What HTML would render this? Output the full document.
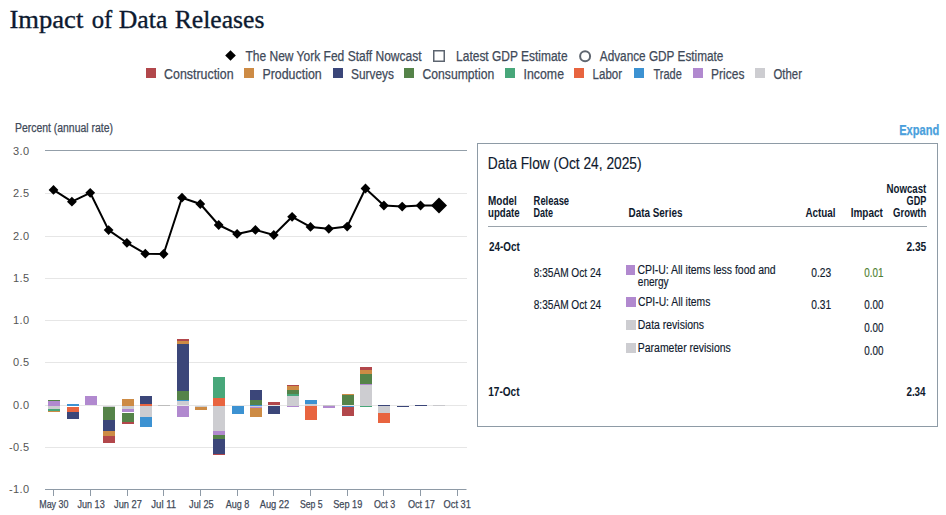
<!DOCTYPE html>
<html><head><meta charset="utf-8"><title>Impact of Data Releases</title>
<style>
html,body{margin:0;padding:0;background:#fff;width:946px;height:515px;overflow:hidden;font-family:"Liberation Sans",sans-serif;}
svg{display:block;}
</style></head><body>
<svg width="946" height="515" viewBox="0 0 946 515">
<rect x="0" y="0" width="946" height="515" fill="#fff"/>
<path d="M230.5 50.2 L235.8 55.5 L230.5 60.8 L225.2 55.5 Z" fill="#000"/>
<rect x="433.75" y="50.75" width="10.5" height="10.5" fill="none" stroke="#5d6570" stroke-width="1.5"/>
<circle cx="585.1" cy="56.2" r="5" fill="none" stroke="#5f6670" stroke-width="2"/>
<rect x="146" y="68" width="10" height="10" fill="#b2474b"/>
<rect x="244" y="68" width="10" height="10" fill="#cd8b45"/>
<rect x="333" y="68" width="10" height="10" fill="#3b4679"/>
<rect x="404" y="68" width="10" height="10" fill="#558349"/>
<rect x="505" y="68" width="10" height="10" fill="#48a77a"/>
<rect x="574" y="68" width="10" height="10" fill="#e8643f"/>
<rect x="634" y="68" width="10" height="10" fill="#3c92d2"/>
<rect x="693" y="68" width="10" height="10" fill="#b189cf"/>
<rect x="755" y="68" width="10" height="10" fill="#cdcdd1"/>
<line x1="45" y1="150.5" x2="467" y2="150.5" stroke="#939fa9" stroke-width="1"/>
<text x="29.50" y="154.9" font-size="11" fill="#555555" font-weight="normal" text-anchor="end" font-family='"Liberation Sans", sans-serif' letter-spacing="0.4">3.0</text>
<line x1="45" y1="193.5" x2="467" y2="193.5" stroke="#e6e6e6" stroke-width="1"/>
<text x="29.50" y="197.21" font-size="11" fill="#555555" font-weight="normal" text-anchor="end" font-family='"Liberation Sans", sans-serif' letter-spacing="0.4">2.5</text>
<line x1="45" y1="236.5" x2="467" y2="236.5" stroke="#e6e6e6" stroke-width="1"/>
<text x="29.50" y="239.52" font-size="11" fill="#555555" font-weight="normal" text-anchor="end" font-family='"Liberation Sans", sans-serif' letter-spacing="0.4">2.0</text>
<line x1="45" y1="278.5" x2="467" y2="278.5" stroke="#e6e6e6" stroke-width="1"/>
<text x="29.50" y="281.83" font-size="11" fill="#555555" font-weight="normal" text-anchor="end" font-family='"Liberation Sans", sans-serif' letter-spacing="0.4">1.5</text>
<line x1="45" y1="320.5" x2="467" y2="320.5" stroke="#e6e6e6" stroke-width="1"/>
<text x="29.50" y="324.14" font-size="11" fill="#555555" font-weight="normal" text-anchor="end" font-family='"Liberation Sans", sans-serif' letter-spacing="0.4">1.0</text>
<line x1="45" y1="362.5" x2="467" y2="362.5" stroke="#e6e6e6" stroke-width="1"/>
<text x="29.50" y="366.45" font-size="11" fill="#555555" font-weight="normal" text-anchor="end" font-family='"Liberation Sans", sans-serif' letter-spacing="0.4">0.5</text>
<line x1="45" y1="405.5" x2="467" y2="405.5" stroke="#e6e6e6" stroke-width="1"/>
<text x="29.50" y="408.76" font-size="11" fill="#555555" font-weight="normal" text-anchor="end" font-family='"Liberation Sans", sans-serif' letter-spacing="0.4">0.0</text>
<line x1="45" y1="447.5" x2="467" y2="447.5" stroke="#e6e6e6" stroke-width="1"/>
<text x="29.50" y="451.07" font-size="11" fill="#555555" font-weight="normal" text-anchor="end" font-family='"Liberation Sans", sans-serif' letter-spacing="0.4">-0.5</text>
<text x="29.50" y="493.38" font-size="11" fill="#555555" font-weight="normal" text-anchor="end" font-family='"Liberation Sans", sans-serif' letter-spacing="0.4">-1.0</text>
<line x1="45" y1="489.5" x2="466.5" y2="489.5" stroke="#8e9aa6" stroke-width="1"/>
<line x1="53.5" y1="489.5" x2="53.5" y2="496" stroke="#8e9aa6" stroke-width="1"/>
<line x1="90.5" y1="489.5" x2="90.5" y2="496" stroke="#8e9aa6" stroke-width="1"/>
<line x1="127.5" y1="489.5" x2="127.5" y2="496" stroke="#8e9aa6" stroke-width="1"/>
<line x1="163.5" y1="489.5" x2="163.5" y2="496" stroke="#8e9aa6" stroke-width="1"/>
<line x1="200.5" y1="489.5" x2="200.5" y2="496" stroke="#8e9aa6" stroke-width="1"/>
<line x1="237.5" y1="489.5" x2="237.5" y2="496" stroke="#8e9aa6" stroke-width="1"/>
<line x1="273.5" y1="489.5" x2="273.5" y2="496" stroke="#8e9aa6" stroke-width="1"/>
<line x1="310.5" y1="489.5" x2="310.5" y2="496" stroke="#8e9aa6" stroke-width="1"/>
<line x1="347.5" y1="489.5" x2="347.5" y2="496" stroke="#8e9aa6" stroke-width="1"/>
<line x1="383.5" y1="489.5" x2="383.5" y2="496" stroke="#8e9aa6" stroke-width="1"/>
<line x1="420.5" y1="489.5" x2="420.5" y2="496" stroke="#8e9aa6" stroke-width="1"/>
<line x1="457.5" y1="489.5" x2="457.5" y2="496" stroke="#8e9aa6" stroke-width="1"/>
<rect x="48" y="400" width="12" height="1" fill="#558349"/>
<rect x="48" y="401" width="12" height="5" fill="#b189cf"/>
<rect x="48" y="406" width="12" height="3" fill="#cdcdd1"/>
<rect x="48" y="409" width="12" height="2" fill="#48a77a"/>
<rect x="48" y="411" width="12" height="1" fill="#cd8b45"/>
<rect x="67" y="404" width="12" height="2" fill="#3c92d2"/>
<rect x="67" y="407" width="12" height="5" fill="#e8643f"/>
<rect x="67" y="412" width="12" height="7" fill="#3b4679"/>
<rect x="85" y="396" width="12" height="9" fill="#b189cf"/>
<rect x="103" y="406" width="12" height="1" fill="#cdcdd1"/>
<rect x="103" y="407" width="12" height="13" fill="#558349"/>
<rect x="103" y="420" width="12" height="11" fill="#3b4679"/>
<rect x="103" y="431" width="12" height="5" fill="#cd8b45"/>
<rect x="103" y="436" width="12" height="7" fill="#b2474b"/>
<rect x="122" y="399" width="12" height="7" fill="#cd8b45"/>
<rect x="122" y="406" width="12" height="3" fill="#cdcdd1"/>
<rect x="122" y="409" width="12" height="3" fill="#b189cf"/>
<rect x="122" y="413" width="12" height="9" fill="#558349"/>
<rect x="122" y="422" width="12" height="2" fill="#b2474b"/>
<rect x="140" y="396" width="12" height="8" fill="#3b4679"/>
<rect x="140" y="404" width="12" height="2" fill="#e8643f"/>
<rect x="140" y="406" width="12" height="11" fill="#cdcdd1"/>
<rect x="140" y="417" width="12" height="10" fill="#3c92d2"/>
<rect x="158" y="405" width="12" height="1" fill="#bdbdbd"/>
<rect x="177" y="339" width="12" height="2" fill="#b2474b"/>
<rect x="177" y="341" width="12" height="3" fill="#cd8b45"/>
<rect x="177" y="344" width="12" height="47" fill="#3b4679"/>
<rect x="177" y="391" width="12" height="9" fill="#558349"/>
<rect x="177" y="400" width="12" height="1" fill="#3c92d2"/>
<rect x="177" y="401" width="12" height="4" fill="#cdcdd1"/>
<rect x="177" y="406" width="12" height="11" fill="#b189cf"/>
<rect x="195" y="406" width="12" height="1" fill="#cdcdd1"/>
<rect x="195" y="407" width="12" height="3" fill="#cd8b45"/>
<rect x="213" y="377" width="12" height="21" fill="#48a77a"/>
<rect x="213" y="398" width="12" height="8" fill="#e8643f"/>
<rect x="213" y="406" width="12" height="25" fill="#cdcdd1"/>
<rect x="213" y="431" width="12" height="4" fill="#b189cf"/>
<rect x="213" y="435" width="12" height="4" fill="#558349"/>
<rect x="213" y="439" width="12" height="15" fill="#3b4679"/>
<rect x="213" y="454" width="12" height="1" fill="#b2474b"/>
<rect x="232" y="406" width="12" height="8" fill="#3c92d2"/>
<rect x="250" y="390" width="12" height="10" fill="#3b4679"/>
<rect x="250" y="400" width="12" height="5" fill="#558349"/>
<rect x="250" y="405" width="12" height="1" fill="#3c92d2"/>
<rect x="250" y="406" width="12" height="1" fill="#cdcdd1"/>
<rect x="250" y="407" width="12" height="1" fill="#b189cf"/>
<rect x="250" y="408" width="12" height="9" fill="#cd8b45"/>
<rect x="268" y="402" width="12" height="3" fill="#b2474b"/>
<rect x="268" y="406" width="12" height="8" fill="#3b4679"/>
<rect x="287" y="385" width="12" height="1" fill="#b2474b"/>
<rect x="287" y="386" width="12" height="4" fill="#cd8b45"/>
<rect x="287" y="390" width="12" height="4" fill="#558349"/>
<rect x="287" y="394" width="12" height="2" fill="#48a77a"/>
<rect x="287" y="396" width="12" height="10" fill="#cdcdd1"/>
<rect x="287" y="406" width="12" height="1" fill="#b189cf"/>
<rect x="305" y="400" width="12" height="4" fill="#3c92d2"/>
<rect x="305" y="404" width="12" height="2" fill="#cdcdd1"/>
<rect x="305" y="406" width="12" height="14" fill="#e8643f"/>
<rect x="323" y="405" width="12" height="1" fill="#c8c8c8"/>
<rect x="323" y="406" width="12" height="2" fill="#b189cf"/>
<rect x="342" y="394" width="12" height="1" fill="#cd8b45"/>
<rect x="342" y="395" width="12" height="10" fill="#558349"/>
<rect x="342" y="406" width="12" height="1" fill="#3c92d2"/>
<rect x="342" y="407" width="12" height="9" fill="#b2474b"/>
<rect x="360" y="367" width="12" height="3" fill="#b2474b"/>
<rect x="360" y="370" width="12" height="4" fill="#cd8b45"/>
<rect x="360" y="374" width="12" height="10" fill="#558349"/>
<rect x="360" y="384" width="12" height="1" fill="#b189cf"/>
<rect x="360" y="385" width="12" height="21" fill="#cdcdd1"/>
<rect x="360" y="406" width="12" height="1" fill="#48a77a"/>
<rect x="378" y="405" width="12" height="1" fill="#3b4679"/>
<rect x="378" y="406" width="12" height="7" fill="#cdcdd1"/>
<rect x="378" y="413" width="12" height="10" fill="#e8643f"/>
<rect x="397" y="406" width="12" height="1" fill="#3b4679"/>
<rect x="415" y="405" width="12" height="1" fill="#3b4679"/>
<rect x="433" y="405" width="12" height="1" fill="#c8c8cc"/>
<path d="M53.5 189.9 L71.9 201.7 L90.2 192.8 L108.6 230.1 L126.9 242.8 L145.3 253.7 L163.6 254.0 L182.0 197.7 L200.3 204.0 L218.7 225.0 L237.1 233.9 L255.4 229.9 L273.8 235.0 L292.1 216.8 L310.5 226.9 L328.8 228.8 L347.2 226.6 L365.5 188.5 L383.9 205.5 L402.2 206.6 L420.6 205.5 L439.0 205.5" fill="none" stroke="#000" stroke-width="2" stroke-linejoin="round"/>
<path d="M53.5 185.0 L58.4 189.9 L53.5 194.8 L48.6 189.9 Z" fill="#000"/>
<path d="M71.9 196.8 L76.8 201.7 L71.9 206.6 L67.0 201.7 Z" fill="#000"/>
<path d="M90.2 187.9 L95.1 192.8 L90.2 197.7 L85.3 192.8 Z" fill="#000"/>
<path d="M108.6 225.2 L113.5 230.1 L108.6 235.0 L103.7 230.1 Z" fill="#000"/>
<path d="M126.9 237.9 L131.8 242.8 L126.9 247.7 L122.0 242.8 Z" fill="#000"/>
<path d="M145.3 248.8 L150.2 253.7 L145.3 258.6 L140.4 253.7 Z" fill="#000"/>
<path d="M163.6 249.1 L168.5 254.0 L163.6 258.9 L158.7 254.0 Z" fill="#000"/>
<path d="M182.0 192.8 L186.9 197.7 L182.0 202.6 L177.1 197.7 Z" fill="#000"/>
<path d="M200.3 199.1 L205.2 204.0 L200.3 208.9 L195.4 204.0 Z" fill="#000"/>
<path d="M218.7 220.1 L223.6 225.0 L218.7 229.9 L213.8 225.0 Z" fill="#000"/>
<path d="M237.1 229.0 L242.0 233.9 L237.1 238.8 L232.2 233.9 Z" fill="#000"/>
<path d="M255.4 225.0 L260.3 229.9 L255.4 234.8 L250.5 229.9 Z" fill="#000"/>
<path d="M273.8 230.1 L278.7 235.0 L273.8 239.9 L268.9 235.0 Z" fill="#000"/>
<path d="M292.1 211.9 L297.0 216.8 L292.1 221.7 L287.2 216.8 Z" fill="#000"/>
<path d="M310.5 222.0 L315.4 226.9 L310.5 231.8 L305.6 226.9 Z" fill="#000"/>
<path d="M328.8 223.9 L333.7 228.8 L328.8 233.7 L323.9 228.8 Z" fill="#000"/>
<path d="M347.2 221.7 L352.1 226.6 L347.2 231.5 L342.3 226.6 Z" fill="#000"/>
<path d="M365.5 183.6 L370.4 188.5 L365.5 193.4 L360.6 188.5 Z" fill="#000"/>
<path d="M383.9 200.6 L388.8 205.5 L383.9 210.4 L379.0 205.5 Z" fill="#000"/>
<path d="M402.2 201.7 L407.1 206.6 L402.2 211.5 L397.3 206.6 Z" fill="#000"/>
<path d="M420.6 200.6 L425.5 205.5 L420.6 210.4 L415.7 205.5 Z" fill="#000"/>
<path d="M439.0 197.5 L447.0 205.5 L439.0 213.5 L431.0 205.5 Z" fill="#000"/>
<rect x="477.5" y="143.5" width="460" height="283" fill="none" stroke="#8e9ba6" stroke-width="1"/>
<line x1="488" y1="226.5" x2="927" y2="226.5" stroke="#9aa3ab" stroke-width="1"/>
<rect x="626" y="265" width="9" height="10" fill="#b189cf"/>
<rect x="626" y="297" width="10" height="10" fill="#b189cf"/>
<rect x="626" y="320" width="10" height="10" fill="#cdcdd1"/>
<rect x="626" y="343" width="10" height="10" fill="#cdcdd1"/>
<text x="9.40" y="28" font-size="25.5" fill="#0d1a30" font-weight="normal" text-anchor="start" font-family='"Liberation Serif", serif' textLength="73.90" lengthAdjust="spacingAndGlyphs" stroke="#0d1a30" stroke-width="0.35">Impact</text>
<text x="91.70" y="28" font-size="25.5" fill="#0d1a30" font-weight="normal" text-anchor="start" font-family='"Liberation Serif", serif' textLength="20.60" lengthAdjust="spacingAndGlyphs" stroke="#0d1a30" stroke-width="0.35">of</text>
<text x="118.80" y="28" font-size="25.5" fill="#0d1a30" font-weight="normal" text-anchor="start" font-family='"Liberation Serif", serif' textLength="48.50" lengthAdjust="spacingAndGlyphs" stroke="#0d1a30" stroke-width="0.35">Data</text>
<text x="174.70" y="28" font-size="25.5" fill="#0d1a30" font-weight="normal" text-anchor="start" font-family='"Liberation Serif", serif' textLength="89.70" lengthAdjust="spacingAndGlyphs" stroke="#0d1a30" stroke-width="0.35">Releases</text>
<text x="245.40" y="61" font-size="14" fill="#3f4a59" font-weight="normal" text-anchor="start" font-family='"Liberation Sans", sans-serif' textLength="176.20" lengthAdjust="spacingAndGlyphs" stroke="#3f4a59" stroke-width="0.25">The New York Fed Staff Nowcast</text>
<text x="456.10" y="61" font-size="14" fill="#3f4a59" font-weight="normal" text-anchor="start" font-family='"Liberation Sans", sans-serif' textLength="111.50" lengthAdjust="spacingAndGlyphs" stroke="#3f4a59" stroke-width="0.25">Latest GDP Estimate</text>
<text x="599.80" y="61" font-size="14" fill="#3f4a59" font-weight="normal" text-anchor="start" font-family='"Liberation Sans", sans-serif' textLength="123.60" lengthAdjust="spacingAndGlyphs" stroke="#3f4a59" stroke-width="0.25">Advance GDP Estimate</text>
<text x="164.10" y="79.2" font-size="14" fill="#3f4a59" font-weight="normal" text-anchor="start" font-family='"Liberation Sans", sans-serif' textLength="69.50" lengthAdjust="spacingAndGlyphs" stroke="#3f4a59" stroke-width="0.25">Construction</text>
<text x="262.40" y="79.2" font-size="14" fill="#3f4a59" font-weight="normal" text-anchor="start" font-family='"Liberation Sans", sans-serif' textLength="59.30" lengthAdjust="spacingAndGlyphs" stroke="#3f4a59" stroke-width="0.25">Production</text>
<text x="351.00" y="79.2" font-size="14" fill="#3f4a59" font-weight="normal" text-anchor="start" font-family='"Liberation Sans", sans-serif' textLength="42.90" lengthAdjust="spacingAndGlyphs" stroke="#3f4a59" stroke-width="0.25">Surveys</text>
<text x="422.50" y="79.2" font-size="14" fill="#3f4a59" font-weight="normal" text-anchor="start" font-family='"Liberation Sans", sans-serif' textLength="71.70" lengthAdjust="spacingAndGlyphs" stroke="#3f4a59" stroke-width="0.25">Consumption</text>
<text x="523.60" y="79.2" font-size="14" fill="#3f4a59" font-weight="normal" text-anchor="start" font-family='"Liberation Sans", sans-serif' textLength="40.40" lengthAdjust="spacingAndGlyphs" stroke="#3f4a59" stroke-width="0.25">Income</text>
<text x="592.60" y="79.2" font-size="14" fill="#3f4a59" font-weight="normal" text-anchor="start" font-family='"Liberation Sans", sans-serif' textLength="29.40" lengthAdjust="spacingAndGlyphs" stroke="#3f4a59" stroke-width="0.25">Labor</text>
<text x="653.50" y="79.2" font-size="14" fill="#3f4a59" font-weight="normal" text-anchor="start" font-family='"Liberation Sans", sans-serif' textLength="28.30" lengthAdjust="spacingAndGlyphs" stroke="#3f4a59" stroke-width="0.25">Trade</text>
<text x="711.10" y="79.2" font-size="14" fill="#3f4a59" font-weight="normal" text-anchor="start" font-family='"Liberation Sans", sans-serif' textLength="33.30" lengthAdjust="spacingAndGlyphs" stroke="#3f4a59" stroke-width="0.25">Prices</text>
<text x="773.50" y="79.2" font-size="14" fill="#3f4a59" font-weight="normal" text-anchor="start" font-family='"Liberation Sans", sans-serif' textLength="28.50" lengthAdjust="spacingAndGlyphs" stroke="#3f4a59" stroke-width="0.25">Other</text>
<text x="15.00" y="131.8" font-size="12" fill="#3f4a59" font-weight="normal" text-anchor="start" font-family='"Liberation Sans", sans-serif' textLength="97.90" lengthAdjust="spacingAndGlyphs" stroke="#3f4a59" stroke-width="0.25">Percent (annual rate)</text>
<text x="39.20" y="508" font-size="11" fill="#3f4a59" font-weight="normal" text-anchor="start" font-family='"Liberation Sans", sans-serif' textLength="29.30" lengthAdjust="spacingAndGlyphs" stroke="#3f4a59" stroke-width="0.25">May 30</text>
<text x="77.50" y="508" font-size="11" fill="#3f4a59" font-weight="normal" text-anchor="start" font-family='"Liberation Sans", sans-serif' textLength="27.20" lengthAdjust="spacingAndGlyphs" stroke="#3f4a59" stroke-width="0.25">Jun 13</text>
<text x="114.00" y="508" font-size="11" fill="#3f4a59" font-weight="normal" text-anchor="start" font-family='"Liberation Sans", sans-serif' textLength="27.80" lengthAdjust="spacingAndGlyphs" stroke="#3f4a59" stroke-width="0.25">Jun 27</text>
<text x="151.30" y="508" font-size="11" fill="#3f4a59" font-weight="normal" text-anchor="start" font-family='"Liberation Sans", sans-serif' textLength="24.90" lengthAdjust="spacingAndGlyphs" stroke="#3f4a59" stroke-width="0.25">Jul 11</text>
<text x="189.10" y="508" font-size="11" fill="#3f4a59" font-weight="normal" text-anchor="start" font-family='"Liberation Sans", sans-serif' textLength="24.50" lengthAdjust="spacingAndGlyphs" stroke="#3f4a59" stroke-width="0.25">Jul 25</text>
<text x="225.70" y="508" font-size="11" fill="#3f4a59" font-weight="normal" text-anchor="start" font-family='"Liberation Sans", sans-serif' textLength="23.60" lengthAdjust="spacingAndGlyphs" stroke="#3f4a59" stroke-width="0.25">Aug 8</text>
<text x="259.70" y="508" font-size="11" fill="#3f4a59" font-weight="normal" text-anchor="start" font-family='"Liberation Sans", sans-serif' textLength="29.50" lengthAdjust="spacingAndGlyphs" stroke="#3f4a59" stroke-width="0.25">Aug 22</text>
<text x="300.00" y="508" font-size="11" fill="#3f4a59" font-weight="normal" text-anchor="start" font-family='"Liberation Sans", sans-serif' textLength="22.70" lengthAdjust="spacingAndGlyphs" stroke="#3f4a59" stroke-width="0.25">Sep 5</text>
<text x="333.20" y="508" font-size="11" fill="#3f4a59" font-weight="normal" text-anchor="start" font-family='"Liberation Sans", sans-serif' textLength="29.10" lengthAdjust="spacingAndGlyphs" stroke="#3f4a59" stroke-width="0.25">Sep 19</text>
<text x="373.90" y="508" font-size="11" fill="#3f4a59" font-weight="normal" text-anchor="start" font-family='"Liberation Sans", sans-serif' textLength="21.30" lengthAdjust="spacingAndGlyphs" stroke="#3f4a59" stroke-width="0.25">Oct 3</text>
<text x="407.90" y="508" font-size="11" fill="#3f4a59" font-weight="normal" text-anchor="start" font-family='"Liberation Sans", sans-serif' textLength="26.90" lengthAdjust="spacingAndGlyphs" stroke="#3f4a59" stroke-width="0.25">Oct 17</text>
<text x="443.60" y="508" font-size="11" fill="#3f4a59" font-weight="normal" text-anchor="start" font-family='"Liberation Sans", sans-serif' textLength="27.20" lengthAdjust="spacingAndGlyphs" stroke="#3f4a59" stroke-width="0.25">Oct 31</text>
<text x="899.20" y="134.5" font-size="13.9" fill="#4a9fdc" font-weight="bold" text-anchor="start" font-family='"Liberation Sans", sans-serif' textLength="40.10" lengthAdjust="spacingAndGlyphs" stroke="#4a9fdc" stroke-width="0.25">Expand</text>
<text x="487.80" y="168.8" font-size="16" fill="#0f1a2e" font-weight="normal" text-anchor="start" font-family='"Liberation Sans", sans-serif' textLength="153.80" lengthAdjust="spacingAndGlyphs" stroke="#0f1a2e" stroke-width="0.15">Data Flow (Oct 24, 2025)</text>
<text x="488.00" y="205" font-size="12" fill="#0f1a2e" font-weight="bold" text-anchor="start" font-family='"Liberation Sans", sans-serif' textLength="28.80" lengthAdjust="spacingAndGlyphs">Model</text>
<text x="488.00" y="216.5" font-size="12" fill="#0f1a2e" font-weight="bold" text-anchor="start" font-family='"Liberation Sans", sans-serif' textLength="31.60" lengthAdjust="spacingAndGlyphs">update</text>
<text x="533.60" y="205" font-size="12" fill="#0f1a2e" font-weight="bold" text-anchor="start" font-family='"Liberation Sans", sans-serif' textLength="35.50" lengthAdjust="spacingAndGlyphs">Release</text>
<text x="533.60" y="216.5" font-size="12" fill="#0f1a2e" font-weight="bold" text-anchor="start" font-family='"Liberation Sans", sans-serif' textLength="19.50" lengthAdjust="spacingAndGlyphs">Date</text>
<text x="628.50" y="216.5" font-size="12" fill="#0f1a2e" font-weight="bold" text-anchor="start" font-family='"Liberation Sans", sans-serif' textLength="53.90" lengthAdjust="spacingAndGlyphs">Data Series</text>
<text x="805.40" y="216.5" font-size="12" fill="#0f1a2e" font-weight="bold" text-anchor="start" font-family='"Liberation Sans", sans-serif' textLength="30.20" lengthAdjust="spacingAndGlyphs">Actual</text>
<text x="850.70" y="216.5" font-size="12" fill="#0f1a2e" font-weight="bold" text-anchor="start" font-family='"Liberation Sans", sans-serif' textLength="32.10" lengthAdjust="spacingAndGlyphs">Impact</text>
<text x="886.50" y="192.8" font-size="12" fill="#0f1a2e" font-weight="bold" text-anchor="start" font-family='"Liberation Sans", sans-serif' textLength="39.80" lengthAdjust="spacingAndGlyphs">Nowcast</text>
<text x="906.60" y="204.6" font-size="12" fill="#0f1a2e" font-weight="bold" text-anchor="start" font-family='"Liberation Sans", sans-serif' textLength="19.70" lengthAdjust="spacingAndGlyphs">GDP</text>
<text x="893.10" y="216.5" font-size="12" fill="#0f1a2e" font-weight="bold" text-anchor="start" font-family='"Liberation Sans", sans-serif' textLength="33.20" lengthAdjust="spacingAndGlyphs">Growth</text>
<text x="489.00" y="251" font-size="12" fill="#0f1a2e" font-weight="bold" text-anchor="start" font-family='"Liberation Sans", sans-serif' textLength="30.80" lengthAdjust="spacingAndGlyphs">24-Oct</text>
<text x="906.40" y="250.5" font-size="12" fill="#0f1a2e" font-weight="bold" text-anchor="start" font-family='"Liberation Sans", sans-serif' textLength="19.90" lengthAdjust="spacingAndGlyphs">2.35</text>
<text x="533.70" y="276.8" font-size="12" fill="#0f1a2e" font-weight="normal" text-anchor="start" font-family='"Liberation Sans", sans-serif' textLength="67.50" lengthAdjust="spacingAndGlyphs" stroke="#0f1a2e" stroke-width="0.15">8:35AM Oct 24</text>
<text x="637.40" y="274" font-size="12" fill="#0f1a2e" font-weight="normal" text-anchor="start" font-family='"Liberation Sans", sans-serif' textLength="138.20" lengthAdjust="spacingAndGlyphs" stroke="#0f1a2e" stroke-width="0.15">CPI-U: All items less food and</text>
<text x="637.80" y="286.3" font-size="12" fill="#0f1a2e" font-weight="normal" text-anchor="start" font-family='"Liberation Sans", sans-serif' textLength="30.80" lengthAdjust="spacingAndGlyphs" stroke="#0f1a2e" stroke-width="0.15">energy</text>
<text x="811.30" y="277" font-size="12" fill="#0f1a2e" font-weight="normal" text-anchor="start" font-family='"Liberation Sans", sans-serif' textLength="19.90" lengthAdjust="spacingAndGlyphs" stroke="#0f1a2e" stroke-width="0.15">0.23</text>
<text x="864.20" y="277" font-size="12" fill="#4f7f33" font-weight="normal" text-anchor="start" font-family='"Liberation Sans", sans-serif' textLength="19.20" lengthAdjust="spacingAndGlyphs" stroke="#4f7f33" stroke-width="0.15">0.01</text>
<text x="533.70" y="308.5" font-size="12" fill="#0f1a2e" font-weight="normal" text-anchor="start" font-family='"Liberation Sans", sans-serif' textLength="67.50" lengthAdjust="spacingAndGlyphs" stroke="#0f1a2e" stroke-width="0.15">8:35AM Oct 24</text>
<text x="638.00" y="305.7" font-size="12" fill="#0f1a2e" font-weight="normal" text-anchor="start" font-family='"Liberation Sans", sans-serif' textLength="72.30" lengthAdjust="spacingAndGlyphs" stroke="#0f1a2e" stroke-width="0.15">CPI-U: All items</text>
<text x="811.30" y="309" font-size="12" fill="#0f1a2e" font-weight="normal" text-anchor="start" font-family='"Liberation Sans", sans-serif' textLength="19.90" lengthAdjust="spacingAndGlyphs" stroke="#0f1a2e" stroke-width="0.15">0.31</text>
<text x="864.20" y="309" font-size="12" fill="#0f1a2e" font-weight="normal" text-anchor="start" font-family='"Liberation Sans", sans-serif' textLength="19.20" lengthAdjust="spacingAndGlyphs" stroke="#0f1a2e" stroke-width="0.15">0.00</text>
<text x="637.80" y="328.9" font-size="12" fill="#0f1a2e" font-weight="normal" text-anchor="start" font-family='"Liberation Sans", sans-serif' textLength="66.30" lengthAdjust="spacingAndGlyphs" stroke="#0f1a2e" stroke-width="0.15">Data revisions</text>
<text x="864.20" y="332" font-size="12" fill="#0f1a2e" font-weight="normal" text-anchor="start" font-family='"Liberation Sans", sans-serif' textLength="19.20" lengthAdjust="spacingAndGlyphs" stroke="#0f1a2e" stroke-width="0.15">0.00</text>
<text x="637.80" y="351.5" font-size="12" fill="#0f1a2e" font-weight="normal" text-anchor="start" font-family='"Liberation Sans", sans-serif' textLength="93.00" lengthAdjust="spacingAndGlyphs" stroke="#0f1a2e" stroke-width="0.15">Parameter revisions</text>
<text x="864.20" y="354.8" font-size="12" fill="#0f1a2e" font-weight="normal" text-anchor="start" font-family='"Liberation Sans", sans-serif' textLength="19.20" lengthAdjust="spacingAndGlyphs" stroke="#0f1a2e" stroke-width="0.15">0.00</text>
<text x="488.20" y="395.8" font-size="12" fill="#0f1a2e" font-weight="bold" text-anchor="start" font-family='"Liberation Sans", sans-serif' textLength="31.40" lengthAdjust="spacingAndGlyphs">17-Oct</text>
<text x="906.40" y="395.7" font-size="12" fill="#0f1a2e" font-weight="bold" text-anchor="start" font-family='"Liberation Sans", sans-serif' textLength="19.20" lengthAdjust="spacingAndGlyphs">2.34</text>
</svg>
</body></html>
